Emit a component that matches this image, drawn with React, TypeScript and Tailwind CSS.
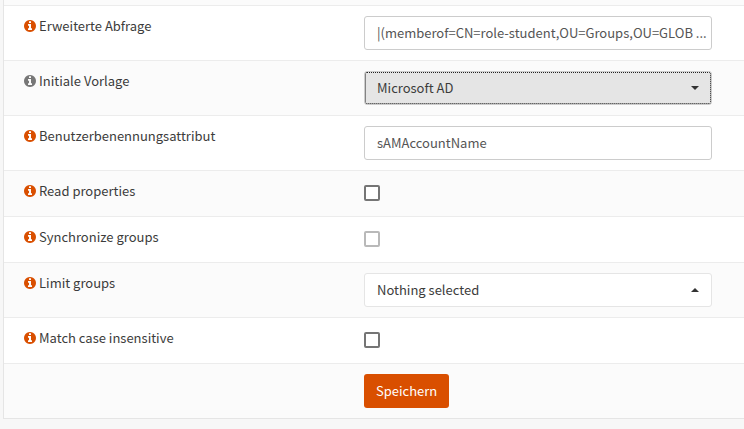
import React from "react";

function InfoIcon({ muted = false }: { muted?: boolean }) {
  return (
    <svg viewBox="0 0 1536 1536" aria-hidden="true" className={`h-3 w-3 shrink-0 ${muted ? "text-[#777777]" : "text-[#d94f00]"}`}>
      <path
        fill="currentColor"
        d="M1024 1248v-160q0-14-9-23t-23-9h-96V544q0-14-9-23t-23-9H544q-14 0-23 9t-9 23v160q0 14 9 23t23 9h96v320h-96q-14 0-23 9t-9 23v160q0 14 9 23t23 9h448q14 0 23-9t9-23zM896 352V192q0-14-9-23t-23-9H672q-14 0-23 9t-9 23v160q0 14 9 23t23 9h192q14 0 23-9t9-23zM1536 768q0 209-103 385.500T1153.500 1433 768 1536t-385.500-103T103 1153.500 0 768t103-385.500T382.500 103 768 0t385.500 103T1433 382.500 1536 768z"
      />
    </svg>
  );
}

type RowProps = { label: string; id: string; muted?: boolean; shaded?: boolean; children: React.ReactNode };

function Row({ label, id, muted, shaded, children }: RowProps) {
  return (
    <div className={`flex border-b border-[#ececec] py-2.5 ${shaded ? "bg-[#fbfbfb]" : "bg-white"}`}>
      <label htmlFor={id} className="flex h-5 w-[360px] shrink-0 items-center gap-[3px] pl-5">
        <InfoIcon muted={muted} />
        {label}
      </label>
      <div className="min-w-0 flex-1 pr-8">{children}</div>
    </div>
  );
}

const field = "block h-[34px] w-full rounded-[3px] border border-[#cccccc] bg-white pb-0.5 pl-3 text-[#555555]";

function Select({ id, value, open = false }: { id: string; value: string; open?: boolean }) {
  return (
    <div className="relative">
      <select
        id={id}
        className={`block h-[34px] w-full appearance-none rounded-[3px] border px-3 text-[#3c3c3b] ${open ? "border-[#e5e5e5] bg-white" : "border-[#cccccc] bg-[#e5e5e5] outline-1 -outline-offset-2 outline-dotted outline-[#222222]"}`}
      >
        <option>{value}</option>
      </select>
      <svg viewBox="0 0 8 4" aria-hidden="true" className="pointer-events-none absolute top-[15px] right-[13px] h-1 w-2">
        <path d={open ? "M0 4L4 0L8 4Z" : "M0 0L4 4L8 0Z"} fill="#333333" />
      </svg>
    </div>
  );
}

function Check({ id, disabled }: { id: string; disabled?: boolean }) {
  return (
    <div className="h-[25px] pt-1">
      <input
        id={id}
        type="checkbox"
        disabled={disabled}
        className="block h-4 w-4 appearance-none rounded-[2px] border-2 border-[#757575] bg-white disabled:border-[#b9b9b9]"
      />
    </div>
  );
}

export default function App() {
  return (
    <main className="min-h-screen bg-[#f7f7f7] pl-[3px] font-['Noto_Sans_CJK_SC',sans-serif] text-[13px] leading-5 text-[#3c3c3b]">
      <form className="border-b border-l border-[#e5e5e5]" onSubmit={(e) => e.preventDefault()}>
        <div className="h-1.5 border-b border-[#ececec] bg-[#fbfbfb]" />
        <Row id="query" label="Erweiterte Abfrage">
          <input id="query" className={field} defaultValue="|(memberof=CN=role-student,OU=Groups,OU=GLOB ..." />
        </Row>
        <Row id="template" label="Initiale Vorlage" muted shaded>
          <Select id="template" value="Microsoft AD" />
        </Row>
        <Row id="naming" label="Benutzerbenennungsattribut">
          <input id="naming" className={field} defaultValue="sAMAccountName" />
        </Row>
        <Row id="read" label="Read properties" shaded>
          <Check id="read" />
        </Row>
        <Row id="sync" label="Synchronize groups">
          <Check id="sync" disabled />
        </Row>
        <Row id="limit" label="Limit groups" shaded>
          <Select id="limit" value="Nothing selected" open />
        </Row>
        <Row id="case" label="Match case insensitive">
          <Check id="case" />
        </Row>
        <div className="bg-[#fbfbfb] py-2.5 pl-[360px]">
          <button type="submit" className="h-[34px] rounded-[3px] bg-[#d94f00] px-3 text-white">Speichern</button>
        </div>
      </form>
    </main>
  );
}
